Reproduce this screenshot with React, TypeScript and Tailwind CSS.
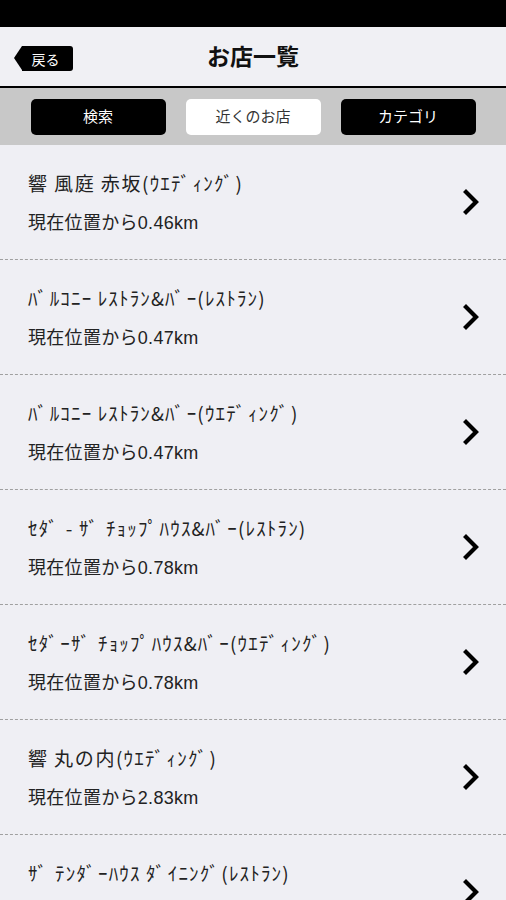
import React from "react";

const rows = [
  { name: "響 風庭 赤坂(ｳｴﾃﾞｨﾝｸﾞ)", dist: "0.46" },
  { name: "ﾊﾞﾙｺﾆｰ ﾚｽﾄﾗﾝ&ﾊﾞｰ(ﾚｽﾄﾗﾝ)", dist: "0.47" },
  { name: "ﾊﾞﾙｺﾆｰ ﾚｽﾄﾗﾝ&ﾊﾞｰ(ｳｴﾃﾞｨﾝｸﾞ)", dist: "0.47" },
  { name: "ｾﾀﾞ - ｻﾞ ﾁｮｯﾌﾟﾊｳｽ&ﾊﾞｰ(ﾚｽﾄﾗﾝ)", dist: "0.78" },
  { name: "ｾﾀﾞｰｻﾞ ﾁｮｯﾌﾟﾊｳｽ&ﾊﾞｰ(ｳｴﾃﾞｨﾝｸﾞ)", dist: "0.78" },
  { name: "響 丸の内(ｳｴﾃﾞｨﾝｸﾞ)", dist: "2.83" },
  { name: "ｻﾞ ﾃﾝﾀﾞｰﾊｳｽ ﾀﾞｲﾆﾝｸﾞ(ﾚｽﾄﾗﾝ)", dist: "3.01" },
];

function Name({ text }: { text: string }) {
  const chars = Array.from(text);
  return (
    <>
      {chars.map((c, i) => {
        if (c === "ﾞ" || c === "ﾟ") {
          return (
            <span key={i} className="mr-[1.5px]">{c}</span>
          );
        }
        if (/[\u3040-\u30ff\u4e00-\u9fff]/.test(c)) {
          return (
            <span key={i} className="mr-[0.5px]">{c}</span>
          );
        }
        return <React.Fragment key={i}>{c}</React.Fragment>;
      })}
    </>
  );
}

function Chevron() {
  return (
    <svg width="18" height="26" viewBox="0 0 18 26" className="shrink-0">
      <path d="M4 3 L14 13 L4 23" fill="none" stroke="#000" strokeWidth="4.2" strokeLinecap="square" strokeLinejoin="miter" />
    </svg>
  );
}

export default function App() {
  const font = { fontFamily: '"Noto Sans CJK JP", "Noto Sans", sans-serif' };
  return (
    <div className="w-[506px] h-[900px] overflow-hidden bg-[#efeff4] flex flex-col" style={font}>
      <div className="h-[27px] bg-black shrink-0" />
      <div className="h-[61px] shrink-0 bg-[#f0f0f4] border-b-[2px] border-black relative flex items-center justify-center">
        <div className="absolute left-[14px] top-[19px] flex items-stretch h-[25px]">
          <div className="w-0 h-0 border-y-[12.5px] border-y-transparent border-r-[8px] border-r-black" />
          <div className="w-[51px] bg-black rounded-r-[3px] flex items-center justify-center text-white text-[14px] leading-none pr-[4px]">
            戻る
          </div>
        </div>
        <div className="text-[23px] font-bold text-[#111] leading-none pb-[2px]">お店一覧</div>
      </div>
      <div className="h-[57px] shrink-0 bg-[#c8c8c8] flex items-center justify-center gap-[20px]">
        <div className="w-[135px] h-[36px] rounded-[5px] bg-black text-white flex items-center justify-center text-[15px]">検索</div>
        <div className="w-[135px] h-[36px] rounded-[5px] bg-white text-[#333] flex items-center justify-center text-[15px]">近くのお店</div>
        <div className="w-[135px] h-[36px] rounded-[5px] bg-black text-white flex items-center justify-center text-[15px]">カテゴリ</div>
      </div>
      <div className="flex flex-col">
        {rows.map((r, i) => (
          <div key={i} className="h-[115px] shrink-0 border-b border-dashed border-[#a0a0a0] flex items-center pl-[28px] pr-[26px]">
            <div className="flex-1 flex flex-col pt-[1px]">
              <div className="text-[19px] leading-[24px] text-[#222] whitespace-nowrap tracking-[1.15px]">
                <Name text={r.name} />
              </div>
              <div
                className="text-[18px] leading-[22px] text-[#222] mt-[17px] tracking-[0.3px]"
                style={{ fontFamily: '"Liberation Sans", "Noto Sans CJK JP", sans-serif' }}
              >
                現在位置から{r.dist}km
              </div>
            </div>
            <Chevron />
          </div>
        ))}
      </div>
    </div>
  );
}
